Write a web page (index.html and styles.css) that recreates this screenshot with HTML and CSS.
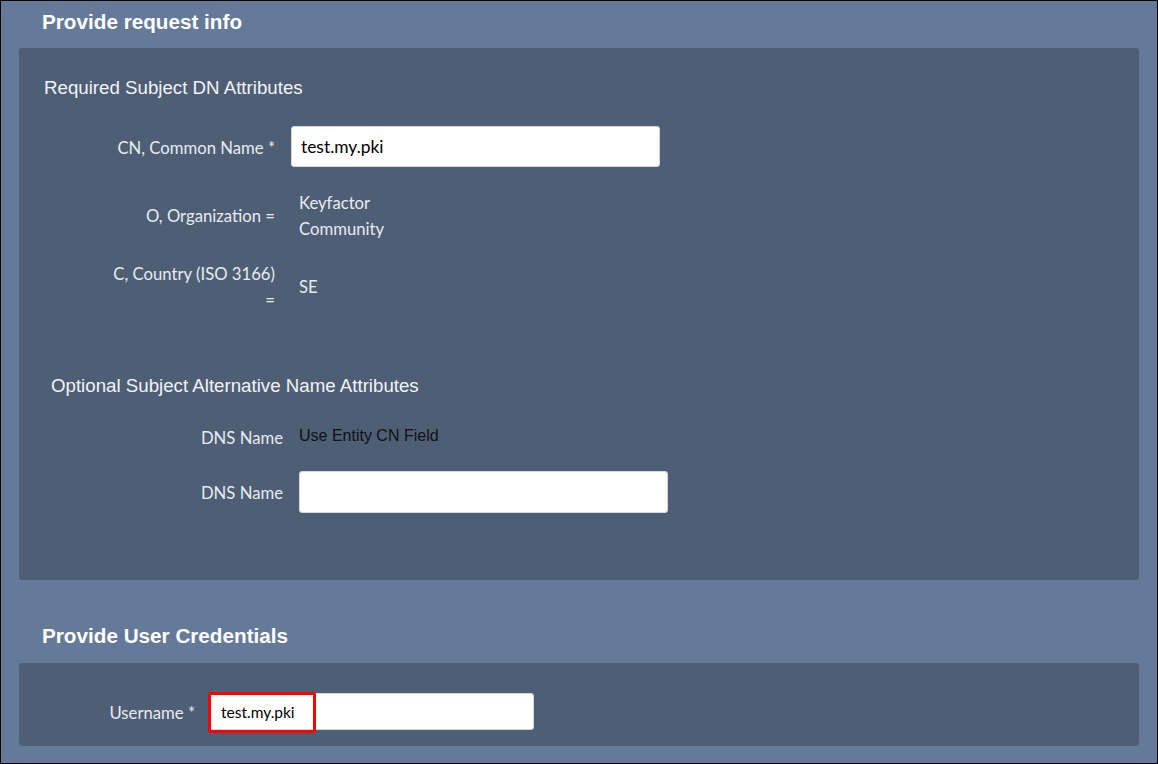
FILE: index.html
```html
<!DOCTYPE html>
<html lang="en">
<head>
    <meta charset="UTF-8">
    <title>Enroll - Provide request info</title>
    <link rel="stylesheet" href="styles.css">
</head>
<body>
    <div class="frame">
        <h2 class="step-title">Provide request info</h2>
        <div class="panel panel-request">
            <div class="group">
                <h3 class="group-title">Required Subject DN Attributes</h3>
                <div class="field-row row-cn">
                    <label class="field-label">CN, Common Name *</label>
                    <input class="text-input" type="text" value="test.my.pki">
                </div>
                <div class="field-row row-org">
                    <label class="field-label">O, Organization =</label>
                    <div class="field-value">Keyfactor<br>Community</div>
                </div>
                <div class="field-row">
                    <label class="field-label">C, Country (ISO 3166)<br>=</label>
                    <div class="field-value">SE</div>
                </div>
            </div>

            <div class="group group-alt">
                <h3 class="group-title">Optional Subject Alternative Name Attributes</h3>
                <div class="field-row row-dns">
                    <label class="field-label">DNS Name</label>
                    <div class="field-static">Use Entity CN Field</div>
                </div>
                <div class="field-row">
                    <label class="field-label">DNS Name</label>
                    <input class="text-input" type="text" value="">
                </div>
            </div>
        </div>

        <h2 class="step-title step-credentials">Provide User Credentials</h2>
        <div class="panel panel-credentials">
            <div class="field-row cred-row">
                <label class="field-label">Username *</label>
                <div class="input-wrap">
                    <input class="text-input small-input" type="text" value="test.my.pki">
                    <span class="highlight"></span>
                </div>
            </div>
        </div>
    </div>
</body>
</html>
```

FILE: styles.css
```css
body {
    margin: 0;
    font-family: "Liberation Sans", Arial, sans-serif;
    background: #000;
}
.frame {
    width: 1158px;
    height: 764px;
    box-sizing: border-box;
    border: 1px solid #000;
    background-color: #657a98;
    padding: 0 18px 17px 18px;
    overflow: hidden;
}
.step-title {
    margin: 0;
    padding: 9px 0 14px 23px;
    font-size: 20.7px;
    line-height: 24px;
    font-weight: bold;
    color: #fff;
}
.step-credentials {
    padding-top: 44px;
    padding-bottom: 15px;
}
.panel {
    background-color: #4e5e75;
    border-radius: 3px;
}
.panel-request {
    padding: 28px 0 67px 0;
}
.panel-credentials {
    padding: 30px 0 16px 0;
}
.group-title {
    margin: 0 0 26px 25px;
    font-size: 18.7px;
    line-height: 24px;
    font-weight: normal;
    color: #f2f4f7;
}
.group-alt {
    margin-top: 62px;
    margin-left: 8px;
}
.group-alt .group-title {
    margin-left: 24px;
}
.field-row {
    display: grid;
    grid-template-columns: 256px 369px;
    column-gap: 16px;
    align-items: center;
    margin-bottom: 20px;
}
.field-row:last-child {
    margin-bottom: 0;
}
.row-cn { margin-bottom: 22px; }
.row-org { margin-bottom: 19px; }
.row-dns { margin-bottom: 21px; }
.field-label {
    position: relative;
    top: 1px;
    text-align: right;
    font-family: Lato, "Open Sans", sans-serif;
    font-size: 16.7px;
    line-height: 26px;
    color: #e8ebf0;
}
.field-value {
    position: relative;
    top: 1px;
    padding-left: 8px;
    font-family: Lato, "Open Sans", sans-serif;
    font-size: 16.7px;
    line-height: 26px;
    color: #e8ebf0;
}
.field-static {
    font-size: 16px;
    line-height: 26px;
    color: #111;
    position: relative;
    top: -1px;
}
.text-input {
    box-sizing: border-box;
    width: 100%;
    height: 41px;
    margin: 0;
    padding: 0 9px;
    border: 1px solid #d4d8de;
    border-radius: 3px;
    background: #fff;
    font-family: Lato, "Open Sans", sans-serif;
    font-size: 17.4px;
    color: #000;
    outline: none;
}
.group-alt .text-input {
    height: 42px;
}
.cred-row {
    grid-template-columns: 176px 325px;
    column-gap: 14px;
}
.input-wrap {
    position: relative;
}
.small-input {
    height: 37px;
    padding-left: 11px;
    font-size: 15.5px;
}
.highlight {
    position: absolute;
    left: -1px;
    top: -1px;
    width: 108px;
    height: 41px;
    box-sizing: border-box;
    border: 3px solid #f00;
    border-radius: 3px;
}
```
